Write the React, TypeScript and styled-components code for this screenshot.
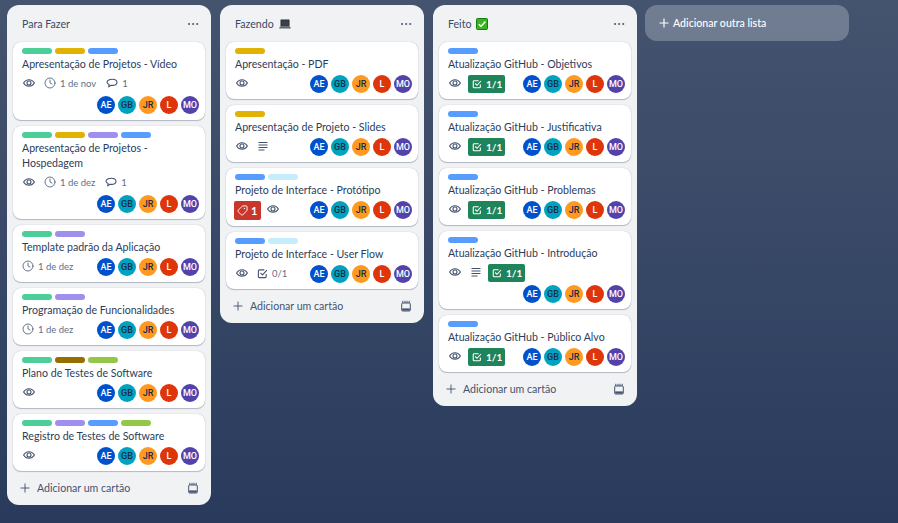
import React from 'react'
import styled, { createGlobalStyle } from 'styled-components'
import { Clock, Tag, Plus, Ellipsis } from 'lucide-react'

const GlobalStyle = createGlobalStyle`
  html, body { margin: 0; padding: 0; height: 100%; }
  body {
    background: linear-gradient(180deg, #44546f 0%, #2a3a5c 100%);
    font-family: Lato, Roboto, "Liberation Sans", sans-serif;
    overflow: hidden;
  }
`

const labelColors: Record<string, string> = {
  green: '#4bce97',
  yellow: '#e2b203',
  purple: '#9f8fef',
  blue: '#579dff',
  sky: '#c6edfb',
  brown: '#946f00',
  lime: '#94c748',
}

const members = [
  { initials: 'AE', bg: '#0052cc', fg: '#ffffff' },
  { initials: 'GB', bg: '#00a3bf', fg: '#172b4d' },
  { initials: 'JR', bg: '#ff991f', fg: '#172b4d' },
  { initials: 'L', bg: '#de350b', fg: '#ffffff' },
  { initials: 'MO', bg: '#5243aa', fg: '#ffffff' },
]

const Board = styled.div`
  display: flex;
  align-items: flex-start;
  gap: 9px;
  padding: 5px 0 0 7px;
  height: 523px;
  box-sizing: border-box;
`

const List = styled.section`
  width: 204px;
  flex: none;
  background: #f1f2f4;
  border-radius: 12px;
`

const ListHeader = styled.header`
  height: 37px;
  display: flex;
  align-items: center;
  justify-content: space-between;
  padding: 0 11px 0 15px;
  svg { color: #44546f; }
`

const ListName = styled.h2`
  margin: 0;
  display: flex;
  align-items: center;
  gap: 5px;
  font-size: 10.6px;
  font-weight: 400;
  color: #3a4a66;
`

const Cards = styled.div`
  display: flex;
  flex-direction: column;
  gap: 6px;
  padding: 0 6px;
`

const CardBox = styled.article`
  background: #ffffff;
  border-radius: 8px;
  padding: 6px 6px 6px 9px;
  box-shadow: 0 1px 1px #091e4240, 0 0 1px #091e424f;
`

const Labels = styled.div`
  display: flex;
  gap: 3px;
  height: 6px;
`

const Label = styled.span<{ $color: string }>`
  width: 30px;
  height: 6px;
  border-radius: 3px;
  background: ${p => p.$color};
`

const CardTitle = styled.div`
  margin-top: 3px;
  font-size: 10.6px;
  line-height: 15px;
  color: #2c3d5a;
`

const CardFooter = styled.div`
  display: flex;
  flex-wrap: wrap;
  align-items: flex-start;
  gap: 3px 0;
  margin-top: 3px;
`

const Badges = styled.div`
  display: flex;
  align-items: flex-start;
  min-height: 18px;
  gap: 8px;
`

const Badge = styled.span`
  display: inline-flex;
  align-items: center;
  height: 16px;
  gap: 4px;
  font-size: 9.5px;
  color: #626f86;
  svg { color: #44546f; flex: none; }
`

const CommentBadge = styled(Badge)`
  margin-left: 2px;
`

const StatusBadge = styled.span<{ $bg: string; $tall?: boolean }>`
  display: inline-flex;
  align-items: center;
  gap: 4px;
  height: ${p => (p.$tall ? 19 : 18)}px;
  margin-left: -2px;
  padding: 0 3px 0 4px;
  border-radius: 2px;
  background: ${p => p.$bg};
  color: #ffffff;
  font-size: 10px;
  font-weight: 700;
`

const AttentionBadge = styled(StatusBadge)`
  margin-left: -1px;
  margin-right: -3px;
  gap: 3px;
  padding: 0 4px 0 3px;
  font-size: 11px;
`

const Members = styled.div`
  display: flex;
  gap: 3px;
  margin-left: auto;
`

const Avatar = styled.span<{ $bg: string; $fg: string }>`
  width: 18px;
  height: 18px;
  border-radius: 50%;
  display: flex;
  align-items: center;
  justify-content: center;
  background: ${p => p.$bg};
  color: ${p => p.$fg};
  font-family: Roboto, sans-serif;
  font-size: 9px;
  font-weight: 500;
`

const AddRow = styled.div`
  height: 34px;
  display: flex;
  align-items: center;
  justify-content: space-between;
  padding: 0 12px 0 11px;
  color: #44546f;
`

const AddLabel = styled.span`
  display: flex;
  align-items: center;
  gap: 5px;
  font-size: 10.6px;
  color: #44546f;
`

const AddList = styled.div`
  width: 204px;
  height: 36px;
  margin-left: -1px;
  flex: none;
  box-sizing: border-box;
  display: flex;
  align-items: center;
  gap: 2px;
  padding-left: 12px;
  border-radius: 12px;
  background: #ffffff3d;
  color: #ffffff;
  font-size: 10.6px;
  font-weight: 500;
`

const Eye = () => (
  <svg width="14" height="14" viewBox="0 0 14 14" fill="none" stroke="currentColor" strokeWidth="1.1">
    <path d="M1.6 7C2.8 4.9 4.7 3.7 7 3.7S11.2 4.9 12.4 7C11.2 9.1 9.3 10.3 7 10.3S2.8 9.1 1.6 7Z" />
    <circle cx="7" cy="7" r="2" />
  </svg>
)

const Bubble = () => (
  <svg width="12" height="12" viewBox="0 0 12 12" fill="none" stroke="currentColor" strokeWidth="1.1" strokeLinejoin="round">
    <path d="M6.4 2.2C9 2.2 11 3.5 11 5.3S9 8.4 6.4 8.4C5.9 8.4 5.4 8.3 5 8.2L2.7 9.9 3.1 7.6C1.8 7 1 6.2 1 5.3 1 3.5 3.8 2.2 6.4 2.2Z" />
  </svg>
)

const DescLines = () => (
  <svg width="12" height="12" viewBox="0 0 12 12" fill="none" stroke="currentColor" strokeWidth="1">
    <path d="M1.5 2.5H10.5M1.5 5H10.5M1.5 7.5H10.5M1.5 10H7.5" />
  </svg>
)

const CheckBox = ({ sw = 1.3, size = 10 }: { sw?: number; size?: number }) => (
  <svg width={size} height={size} viewBox="0 0 12 12" fill="none" stroke="currentColor" strokeWidth={sw}>
    <path d="M10 6.5V9.5A1 1 0 0 1 9 10.5H2.5A1 1 0 0 1 1.5 9.5V3A1 1 0 0 1 2.5 2H8" />
    <path d="M3.8 5.4 6 7.6 10.8 2.4" />
  </svg>
)

const CardTemplate = () => (
  <svg width="12" height="12" viewBox="0 0 12 12" fill="none" stroke="currentColor">
    <path d="M2.8 3V0.8M5 3V0.8M7 3V0.8M9.2 3V0.8" strokeWidth="1" />
    <rect x="1.7" y="3" width="8.6" height="8" rx="1" strokeWidth="1" />
    <rect x="2.2" y="8.4" width="7.6" height="2.2" fill="currentColor" stroke="none" />
  </svg>
)

const Laptop = () => (
  <svg width="12" height="10" viewBox="0 0 12 10">
    <rect x="1.5" y="0.5" width="9" height="7" rx="0.5" fill="#22282e" />
    <rect x="2.4" y="1.3" width="7.2" height="5.4" fill="#3a4148" />
    <path d="M1 7.5H11L12 9.6H0Z" fill="#5b636b" />
  </svg>
)

const CheckEmoji = () => (
  <svg width="12" height="12" viewBox="0 0 12 12">
    <rect x="0.5" y="0.5" width="11" height="11" rx="1" fill="#35b51f" stroke="#1a7a10" />
    <path d="M2.8 6.2 5 8.4 9.4 3.6" fill="none" stroke="#ffffff" strokeWidth="1.5" />
  </svg>
)

type CardData = {
  labels: string[]
  title: string
  watched?: boolean
  due?: string
  comments?: boolean
  description?: boolean
  attention?: boolean
  checklist?: string
  done?: boolean
}

const Card = ({ card }: { card: CardData }) => (
  <CardBox>
    <Labels>
      {card.labels.map((l, i) => <Label key={i} $color={labelColors[l]} />)}
    </Labels>
    <CardTitle>{card.title}</CardTitle>
    <CardFooter>
      <Badges>
        {card.attention && (
          <AttentionBadge $bg="#c9372c" $tall><Tag size={11} style={{ transform: 'scaleX(-1)' }} />1</AttentionBadge>
        )}
        {card.watched !== false && <Badge><Eye /></Badge>}
        {card.due && <Badge><Clock size={12} strokeWidth={1.6} />{card.due}</Badge>}
        {card.comments && <CommentBadge><Bubble />1</CommentBadge>}
        {card.description && <Badge><DescLines /></Badge>}
        {card.checklist && <Badge><CheckBox sw={1.2} size={11} />{card.checklist}</Badge>}
        {card.done && <StatusBadge $bg="#1f845a"><CheckBox />1/1</StatusBadge>}
      </Badges>
      <Members>
        {members.map(m => <Avatar key={m.initials} $bg={m.bg} $fg={m.fg}>{m.initials}</Avatar>)}
      </Members>
    </CardFooter>
  </CardBox>
)

const todo: CardData[] = [
  { labels: ['green', 'yellow', 'blue'], title: 'Apresentação de Projetos - Vídeo', due: '1 de nov', comments: true },
  { labels: ['green', 'yellow', 'purple', 'blue'], title: 'Apresentação de Projetos - Hospedagem', due: '1 de dez', comments: true },
  { labels: ['green', 'purple'], title: 'Template padrão da Aplicação', due: '1 de dez', watched: false },
  { labels: ['green', 'purple'], title: 'Programação de Funcionalidades', due: '1 de dez', watched: false },
  { labels: ['green', 'brown', 'lime'], title: 'Plano de Testes de Software' },
  { labels: ['green', 'purple', 'blue', 'lime'], title: 'Registro de Testes de Software' },
]

const doing: CardData[] = [
  { labels: ['yellow'], title: 'Apresentação - PDF' },
  { labels: ['yellow'], title: 'Apresentação de Projeto - Slides', description: true },
  { labels: ['blue', 'sky'], title: 'Projeto de Interface - Protótipo', attention: true },
  { labels: ['blue', 'sky'], title: 'Projeto de Interface - User Flow', checklist: '0/1' },
]

const done: CardData[] = [
  { labels: ['blue'], title: 'Atualização GitHub - Objetivos', done: true },
  { labels: ['blue'], title: 'Atualização GitHub - Justificativa', done: true },
  { labels: ['blue'], title: 'Atualização GitHub - Problemas', done: true },
  { labels: ['blue'], title: 'Atualização GitHub - Introdução', description: true, done: true },
  { labels: ['blue'], title: 'Atualização GitHub - Público Alvo', done: true },
]

const BoardList = ({ name, icon, cards }: { name: string; icon?: React.ReactNode; cards: CardData[] }) => (
  <List>
    <ListHeader>
      <ListName>{name}{icon}</ListName>
      <Ellipsis size={14} strokeWidth={1.6} />
    </ListHeader>
    <Cards>
      {cards.map(c => <Card key={c.title} card={c} />)}
    </Cards>
    <AddRow>
      <AddLabel><Plus size={14} strokeWidth={1.6} />Adicionar um cartão</AddLabel>
      <CardTemplate />
    </AddRow>
  </List>
)

export default function App() {
  return (
    <>
      <GlobalStyle />
      <Board>
        <BoardList name="Para Fazer" cards={todo} />
        <BoardList name="Fazendo" icon={<Laptop />} cards={doing} />
        <BoardList name="Feito" icon={<CheckEmoji />} cards={done} />
        <AddList><Plus size={14} />Adicionar outra lista</AddList>
      </Board>
    </>
  )
}
